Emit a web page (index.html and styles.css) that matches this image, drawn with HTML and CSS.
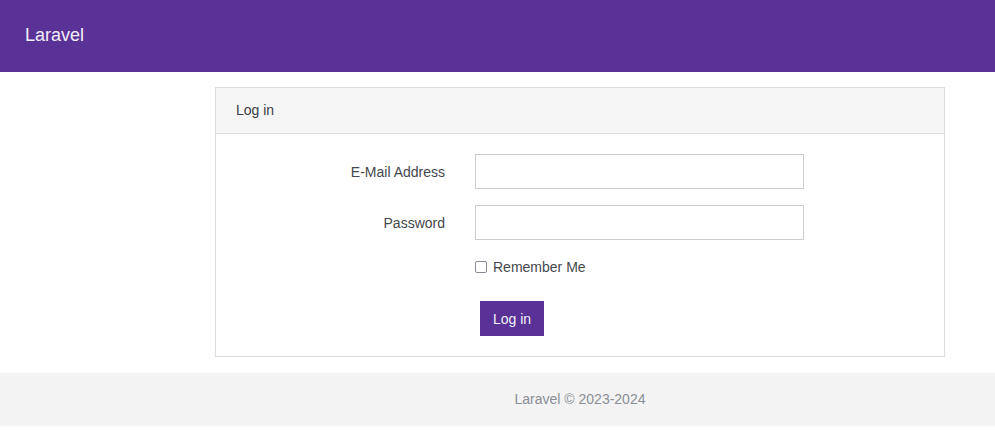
FILE: index.html
```html
<!DOCTYPE html>
<html>
<head>
<meta charset="utf-8">
<link rel="stylesheet" href="styles.css">
</head>
<body>
<nav class="navbar"><span class="brand">Laravel</span></nav>
<main class="main">
  <div class="card">
    <div class="card-header">Log in</div>
    <div class="card-body">
      <div class="form-row">
        <label class="label">E-Mail Address</label>
        <input class="input" type="email">
      </div>
      <div class="form-row">
        <label class="label">Password</label>
        <input class="input" type="password">
      </div>
      <div class="form-row check-row">
        <span class="label"></span>
        <label class="check"><span class="box"></span>Remember Me</label>
      </div>
      <div class="form-row btn-row">
        <span class="label"></span>
        <button class="btn">Log in</button>
      </div>
    </div>
  </div>
</main>
<footer class="footer"><div class="footer-inner">Laravel © 2023-2024</div></footer>
</body>
</html>
```
FILE: styles.css
```css
html, body { margin: 0; padding: 0; }
body {
  font-family: "Liberation Sans", Arial, sans-serif;
  font-size: 14px;
  color: #3d4148;
  background: #fff;
}
.navbar {
  height: 72px;
  background: #5a3196;
  display: flex;
  align-items: center;
  padding-left: 25px;
}
.brand {
  color: #f1eefa;
  font-size: 18px;
  margin-top: -1px;
}
.main {
  padding: 15px 0 16px 215px;
}
.card {
  width: 728px;
  border: 1px solid #dcdcdc;
  background: #fff;
}
.card-header {
  height: 45px;
  line-height: 45px;
  padding-left: 20px;
  background: #f6f6f6;
  border-bottom: 1px solid #dcdcdc;
  color: #3a3d42;
}
.card-body {
  padding: 20px 0 20px 0;
}
.form-row {
  display: flex;
  align-items: center;
  margin-bottom: 16px;
}
.label {
  width: 229px;
  text-align: right;
  padding-right: 30px;
  color: #44474d;
  flex: none;
}
.input {
  width: 329px;
  height: 35px;
  box-sizing: border-box;
  border: 1px solid #cccccc;
  margin: 0;
  padding: 0 8px;
  font: inherit;
  outline: none;
}
.check-row { margin-top: 20px; margin-bottom: 0; height: 14px; }
.check {
  display: flex;
  align-items: center;
  color: #44474d;
}
.box {
  width: 10px;
  height: 10px;
  border: 1.5px solid #8a8a94;
  border-radius: 2px;
  margin-right: 6px;
  background: #fff;
}
.btn-row { margin-top: 27px; margin-bottom: 0; }
.btn {
  margin-left: 5px;
  width: 64px;
  height: 35px;
  background: #5a3196;
  color: #f3f0fa;
  border: none;
  font: inherit;
  padding: 0;
}
.footer {
  background: #f3f3f3;
  height: 53px;
  display: flex;
}
.footer-inner {
  margin-left: 215px;
  width: 730px;
  text-align: center;
  line-height: 53px;
  color: #8a8e96;
}
```
